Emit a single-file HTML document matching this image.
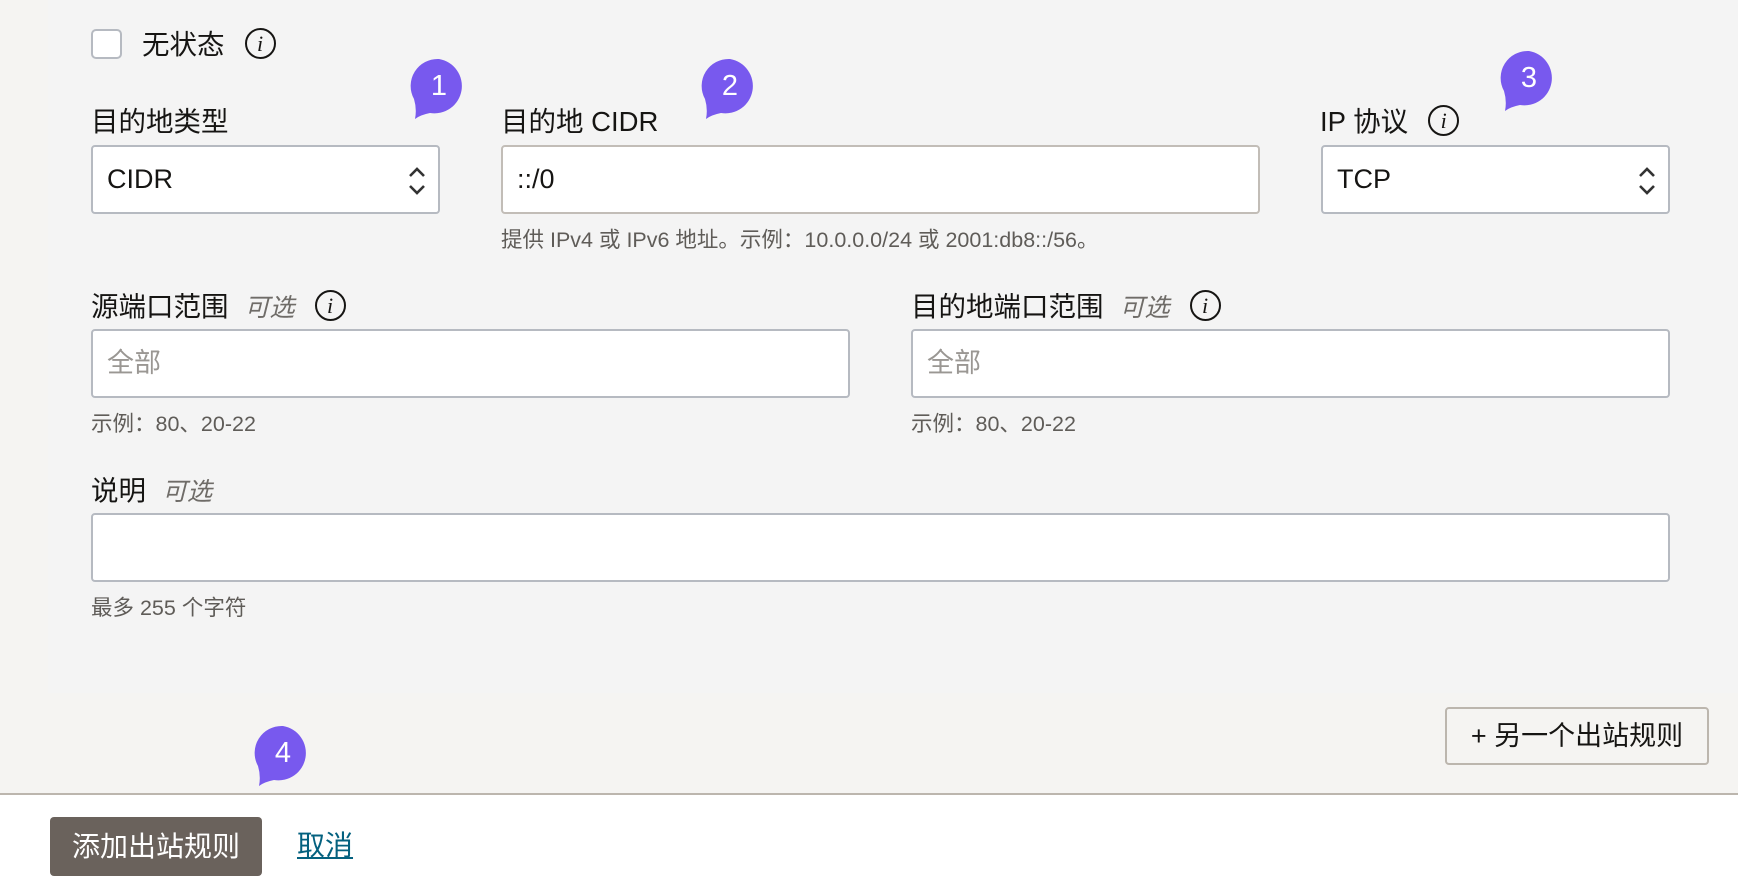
<!DOCTYPE html>
<html><head><meta charset="utf-8"><style>
*{box-sizing:border-box;margin:0;padding:0}
body{width:1738px;height:896px;background:#f5f4f2;font-family:"Liberation Sans","Noto Sans CJK SC",sans-serif;color:#161513;position:relative;overflow:hidden}
.panel{position:absolute;left:48px;top:0;width:1690px;height:693px;background:#f4f4f4}
.a{position:absolute;white-space:nowrap}
.lbl{font-size:27.5px;line-height:30px}
.opt{font-style:italic;color:#6f6c68;font-size:25px;margin-left:16px}
.box{position:absolute;background:#fff;border:2px solid #b6bac1;border-radius:4px;height:69px;font-size:27px;line-height:65px;padding-left:14px}
.box.g{border-color:#c2bdb7}
.ph{color:#9a9793}
.help{font-size:21.5px;color:#5f5c58;line-height:24px}
.info{display:inline-block;width:31px;height:31px;border:2px solid #161513;border-radius:50%;font-family:"Liberation Serif",serif;font-style:italic;font-size:22px;line-height:27px;text-align:center;vertical-align:middle;margin-left:20px;position:relative;top:-3px}
.arr{position:absolute;right:11px;top:18px}
.bub{position:absolute;width:58px;height:62px}
</style></head><body>
<div class="panel"></div>

<div class="a" style="left:91px;top:29px;width:31px;height:30px;background:#fff;border:2px solid #b6bac1;border-radius:5px"></div>
<div class="a lbl" style="left:142px;top:30px">无状态<span class="info">i</span></div>

<div class="a lbl" style="left:91px;top:107px">目的地类型</div>
<div class="box" style="left:91px;top:145px;width:349px">CIDR<svg class="arr" width="20" height="32" viewBox="0 0 20 32"><path d="M3 11 L10 4 L17 11 M3 21 L10 28 L17 21" fill="none" stroke="#333" stroke-width="2.6"/></svg></div>

<div class="a lbl" style="left:501px;top:107px">目的地 CIDR</div>
<div class="box g" style="left:501px;top:145px;width:759px">::/0</div>
<div class="a help" style="left:501px;top:228px">提供 IPv4 或 IPv6 地址。示例：10.0.0.0/24 或 2001:db8::/56。</div>

<div class="a lbl" style="left:1320px;top:107px">IP 协议<span class="info">i</span></div>
<div class="box" style="left:1321px;top:145px;width:349px">TCP<svg class="arr" width="20" height="32" viewBox="0 0 20 32"><path d="M3 11 L10 4 L17 11 M3 21 L10 28 L17 21" fill="none" stroke="#333" stroke-width="2.6"/></svg></div>

<div class="a lbl" style="left:91px;top:292px">源端口范围<span class="opt">可选</span><span class="info">i</span></div>
<div class="box" style="left:91px;top:329px;width:759px"><span class="ph">全部</span></div>
<div class="a help" style="left:91px;top:412px">示例：80、20-22</div>

<div class="a lbl" style="left:911px;top:292px">目的地端口范围<span class="opt">可选</span><span class="info">i</span></div>
<div class="box" style="left:911px;top:329px;width:759px"><span class="ph">全部</span></div>
<div class="a help" style="left:911px;top:412px">示例：80、20-22</div>

<div class="a lbl" style="left:91px;top:476px">说明<span class="opt">可选</span></div>
<div class="box" style="left:91px;top:513px;width:1579px"></div>
<div class="a help" style="left:91px;top:596px">最多 255 个字符</div>

<div class="a" style="left:1445px;top:707px;width:264px;height:58px;border:2px solid #bcb6ae;border-radius:4px;background:#f5f4f2;font-size:27px;line-height:54px;text-align:center">+ 另一个出站规则</div>

<div class="a" style="left:0;top:793px;width:1738px;height:103px;background:#fff;border-top:2px solid #bcb6ae"></div>
<div class="a" style="left:50px;top:817px;width:212px;height:59px;background:#6a625c;border-radius:4px;color:#fff;font-size:28px;line-height:59px;text-align:center">添加出站规则</div>
<div class="a" style="left:297px;top:830px;font-size:28px;line-height:32px;color:#04617f;text-decoration:underline">取消</div>

<svg class="bub" style="left:410px;top:57px" viewBox="0 0 58 62"><path d="M29 2 A27 27 0 1 1 20 56 Q10 58 5 62 Q7 52 4 42 A27 27 0 0 1 29 2Z" fill="#7859ee"/><text x="29" y="38" text-anchor="middle" font-size="29" fill="#fff" font-family="Liberation Sans">1</text></svg>
<svg class="bub" style="left:701px;top:57px" viewBox="0 0 58 62"><path d="M29 2 A27 27 0 1 1 20 56 Q10 58 5 62 Q7 52 4 42 A27 27 0 0 1 29 2Z" fill="#7859ee"/><text x="29" y="38" text-anchor="middle" font-size="29" fill="#fff" font-family="Liberation Sans">2</text></svg>
<svg class="bub" style="left:1500px;top:49px" viewBox="0 0 58 62"><path d="M29 2 A27 27 0 1 1 20 56 Q10 58 5 62 Q7 52 4 42 A27 27 0 0 1 29 2Z" fill="#7859ee"/><text x="29" y="38" text-anchor="middle" font-size="29" fill="#fff" font-family="Liberation Sans">3</text></svg>
<svg class="bub" style="left:254px;top:724px" viewBox="0 0 58 62"><path d="M29 2 A27 27 0 1 1 20 56 Q10 58 5 62 Q7 52 4 42 A27 27 0 0 1 29 2Z" fill="#7859ee"/><text x="29" y="38" text-anchor="middle" font-size="29" fill="#fff" font-family="Liberation Sans">4</text></svg>
</body></html>
